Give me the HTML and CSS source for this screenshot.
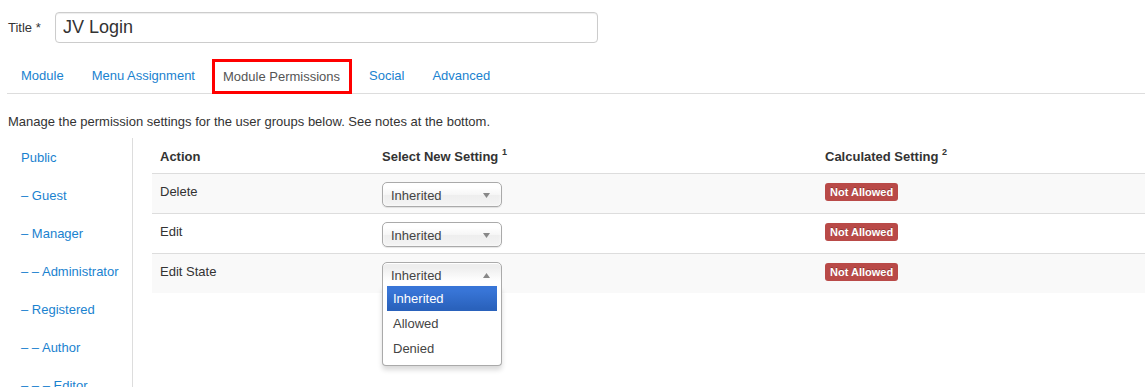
FILE: index.html
```html
<!DOCTYPE html>
<html>
<head>
<meta charset="utf-8">
<title>JV Login - Module Permissions</title>
<link rel="stylesheet" href="styles.css">
</head>
<body>
<div class="page">
  <div class="title-row">
    <label class="title-label">Title *</label>
    <input class="title-input" type="text" value="JV Login">
  </div>

  <ul class="tabs">
    <li class="tab"><a href="#">Module</a></li>
    <li class="tab"><a href="#">Menu Assignment</a></li>
    <li class="tab active"><a href="#">Module Permissions</a></li>
    <li class="tab"><a href="#">Social</a></li>
    <li class="tab"><a href="#">Advanced</a></li>
  </ul>

  <p class="desc">Manage the permission settings for the user groups below. See notes at the bottom.</p>

  <div class="perm">
    <ul class="groups">
      <li><a href="#">Public</a></li>
      <li><a href="#">– Guest</a></li>
      <li><a href="#">– Manager</a></li>
      <li><a href="#">– – Administrator</a></li>
      <li><a href="#">– Registered</a></li>
      <li><a href="#">– – Author</a></li>
      <li><a href="#">– – – Editor</a></li>
    </ul>

    <table class="rules">
      <colgroup>
        <col class="c-action">
        <col class="c-select">
        <col class="c-calc">
      </colgroup>
      <thead>
        <tr>
          <th>Action</th>
          <th>Select New Setting <sup>1</sup></th>
          <th>Calculated Setting <sup>2</sup></th>
        </tr>
      </thead>
      <tbody>
        <tr>
          <td class="name">Delete</td>
          <td>
            <div class="select">
              <span>Inherited</span>
              <svg class="arrow" width="7" height="5" viewBox="0 0 7 5"><path d="M0 0H7L3.5 5Z" fill="#888"/></svg>
            </div>
          </td>
          <td><span class="badge">Not Allowed</span></td>
        </tr>
        <tr>
          <td class="name">Edit</td>
          <td>
            <div class="select">
              <span>Inherited</span>
              <svg class="arrow" width="7" height="5" viewBox="0 0 7 5"><path d="M0 0H7L3.5 5Z" fill="#888"/></svg>
            </div>
          </td>
          <td><span class="badge">Not Allowed</span></td>
        </tr>
        <tr>
          <td class="name">Edit State</td>
          <td>
            <div class="select-wrap">
              <div class="select open">
                <span>Inherited</span>
                <svg class="arrow" width="7" height="5" viewBox="0 0 7 5"><path d="M0 5H7L3.5 0Z" fill="#888"/></svg>
              </div>
              <div class="drop">
                <ul class="results">
                  <li class="hl">Inherited</li>
                  <li>Allowed</li>
                  <li>Denied</li>
                </ul>
              </div>
            </div>
          </td>
          <td><span class="badge">Not Allowed</span></td>
        </tr>
      </tbody>
    </table>
  </div>
</div>
</body>
</html>
```

FILE: styles.css
```css
html, body {
  margin: 0;
  padding: 0;
  overflow: hidden;
  background: #fff;
}

body {
  font-family: "Liberation Sans", Arial, sans-serif;
  font-size: 13px;
  line-height: 18px;
  color: #333;
}

a {
  color: #1a82cf;
  text-decoration: none;
}

.page {
  padding: 12px 0 0 7px;
}

/* Title */
.title-row {
  display: flex;
  align-items: center;
  height: 31px;
}

.title-label {
  width: 47px;
  margin-left: 1px;
  flex: none;
  color: #333;
}

.title-input {
  box-sizing: border-box;
  width: 543px;
  height: 31px;
  margin: 0;
  padding: 0 7px;
  border: 1px solid #ccc;
  border-radius: 4px;
  font-family: "Liberation Sans", Arial, sans-serif;
  font-size: 18px;
  color: #333;
  background: #fff;
  box-shadow: inset 0 1px 1px rgba(0, 0, 0, 0.075);
  outline: none;
}

/* Tabs */
.tabs {
  list-style: none;
  margin: 16px 0 0 0;
  padding: 0;
  display: flex;
  align-items: flex-start;
  border-bottom: 1px solid #ddd;
}

.tab a {
  display: block;
  padding: 0 14px;
  line-height: 34px;
  height: 34px;
}

.tab.active {
  margin: 0 3px -1px 3px;
}

.tab.active a {
  box-sizing: border-box;
  height: 35px;
  line-height: 29px;
  padding: 0 9px 0 8px;
  border: 3px solid #f00;
  color: #555;
  background: #fff;
}

/* Description */
.desc {
  margin: 19px 0 0 1px;
}

/* Permissions layout */
.perm {
  display: flex;
  align-items: flex-start;
  margin-top: 7px;
}

.groups {
  list-style: none;
  box-sizing: border-box;
  flex: none;
  width: 126px;
  min-height: 260px;
  margin: 0;
  padding: 0 0 0 14px;
  border-right: 1px solid #ddd;
}

.groups li a {
  display: block;
  padding: 11px 0 9px 0;
  line-height: 18px;
}

/* Table */
.rules {
  flex: 1;
  margin: 1px 0 0 19px;
  border-collapse: collapse;
  border-spacing: 0;
}

.c-action { width: 222px; }
.c-select { width: 443px; }

.rules th {
  text-align: left;
  font-weight: bold;
  padding: 9px 8px 7px 8px;
  line-height: 18px;
  vertical-align: top;
}

.rules sup {
  font-size: 9px;
  line-height: 0;
  position: relative;
  top: -1px;
}

.rules td {
  border-top: 1px solid #ddd;
  padding: 8px 8px 6px 8px;
  line-height: 18px;
  vertical-align: top;
}

.rules td.name {
  padding: 9px 8px 5px 8px;
}

.rules tbody tr:nth-child(odd) td {
  background: #f9f9f9;
}

/* Chosen-like select */
.select-wrap {
  position: relative;
  width: 120px;
}

.select {
  box-sizing: border-box;
  width: 120px;
  height: 25px;
  display: flex;
  align-items: center;
  justify-content: space-between;
  padding: 1px 11px 0 8px;
  border: 1px solid #aaa;
  border-radius: 5px;
  background: linear-gradient(#fff 20%, #f6f6f6 50%, #eee 52%, #f4f4f4 100%);
  box-shadow: inset 0 0 3px #fff, 0 1px 1px rgba(0, 0, 0, 0.1);
  color: #444;
  font-size: 13px;
  line-height: 23px;
}

.select.open {
  border-bottom-left-radius: 0;
  border-bottom-right-radius: 0;
  background: linear-gradient(#eee 20%, #fff 80%);
  box-shadow: inset 0 1px 0 #fff;
  position: relative;
  z-index: 2;
}

.drop {
  position: absolute;
  left: 0;
  top: 24px;
  box-sizing: border-box;
  width: 120px;
  background: #fff;
  border: 1px solid #aaa;
  border-top: 0;
  border-radius: 0 0 4px 4px;
  box-shadow: 0 4px 5px rgba(0, 0, 0, 0.15);
  z-index: 3;
}

.results {
  list-style: none;
  margin: 0 4px 4px 0;
  padding: 0 0 0 4px;
}

.results li {
  padding: 5px 6px;
  line-height: 15px;
  color: #444;
  font-size: 13px;
}

.results li.hl {
  color: #fff;
  background: linear-gradient(#3875d7 20%, #2a62bc 90%);
}

/* Badge */
.badge {
  display: inline-block;
  margin-top: 1px;
  padding: 2px 5px;
  font-size: 11px;
  font-weight: bold;
  line-height: 14px;
  color: #fff;
  background: #b94a48;
  border-radius: 3px;
  text-shadow: 0 -1px 0 rgba(0, 0, 0, 0.25);
  vertical-align: top;
}
```
